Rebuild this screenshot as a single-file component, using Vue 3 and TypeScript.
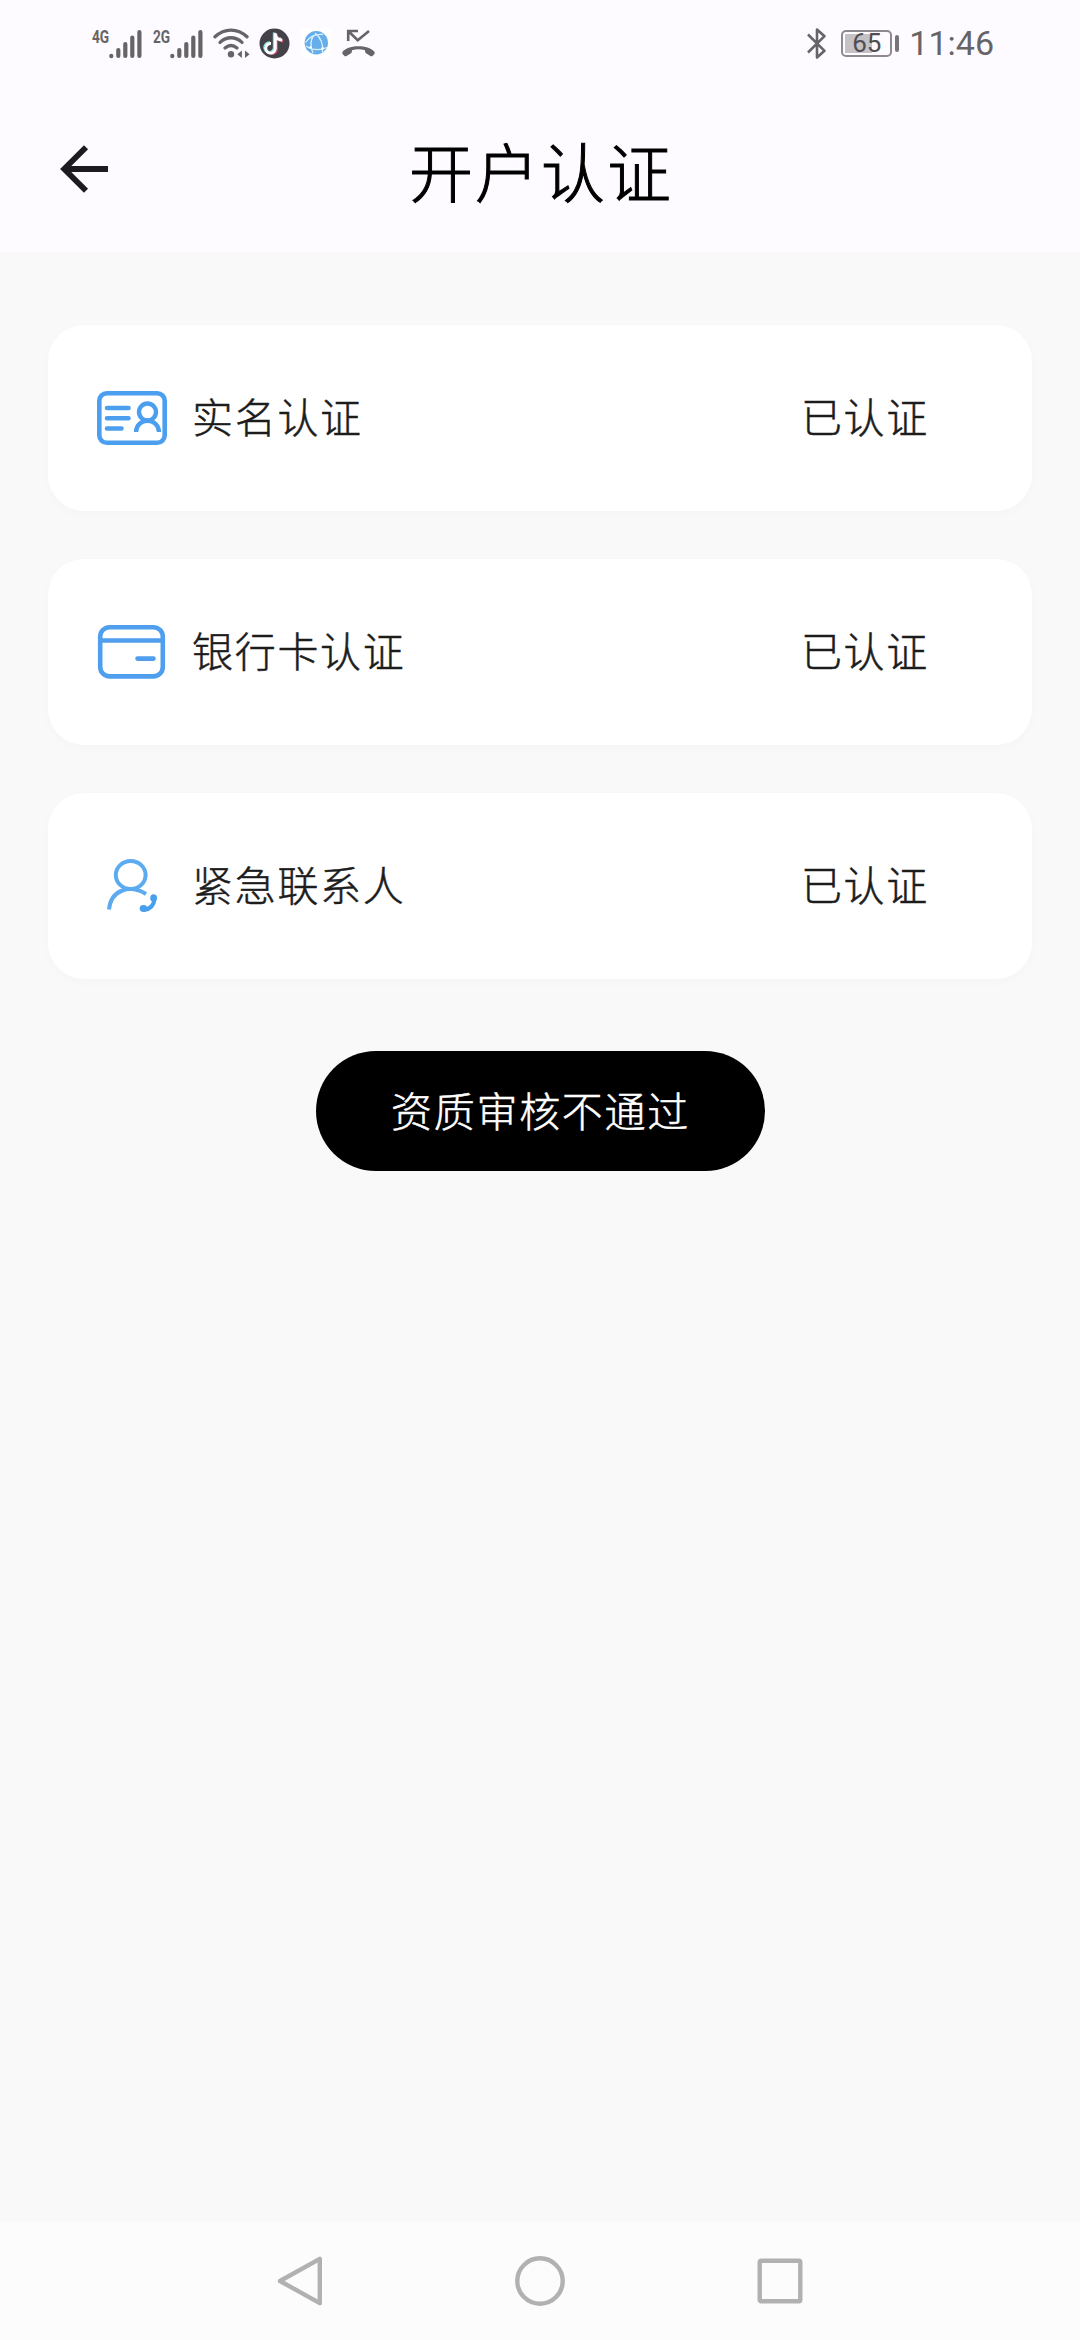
<script setup lang="ts">
interface AuthItem {
  icon: 'identity' | 'card' | 'contact'
  label: string
  status: string
}

const items: AuthItem[] = [
  { icon: 'identity', label: '实名认证', status: '已认证' },
  { icon: 'card', label: '银行卡认证', status: '已认证' },
  { icon: 'contact', label: '紧急联系人', status: '已认证' },
]

const networks: string[] = ['4G', '2G']
</script>

<template>
  <div class="screen">
    <header class="top">
      <div class="status-bar">
        <div class="status-left">
          <div v-for="net in networks" :key="net" class="signal">
            <span class="net">{{ net }}</span>
            <svg class="bars" width="33" height="32" viewBox="0 0 33 32">
              <g stroke="#666467" stroke-width="4.2" stroke-linecap="round">
                <path d="M2.3 27.8v.4M9.3 22v6M16.3 16v12M23.3 9.5V28M30.4 4v24" />
              </g>
            </svg>
          </div>
          <svg class="wifi" width="38" height="32" viewBox="0 0 38 32">
            <g fill="none" stroke="#666467" stroke-width="3.3" stroke-linecap="round">
              <path d="M2 9.8C11.5.8 24.5.8 34 9.8" />
              <path d="M7 15.4c6.8-6.2 15.2-6.2 22 0" />
              <path d="M12 21c3.8-3.2 8.2-3.2 12 0" />
            </g>
            <circle cx="18" cy="27.3" r="3.2" fill="#666467" />
            <path d="M24.3 27.3l4.6-3.8v7.6zM32 23.5v7.6l4.6-3.8z" fill="#666467" />
          </svg>
          <svg class="tiktok" width="31" height="31" viewBox="0 0 31 31">
            <circle cx="15.5" cy="15.5" r="15" fill="#444148" />
            <g fill="none" stroke-width="2.8">
              <path d="M15.200 4.400v15.300a4.800 4.800 0 1 1-4.400-5M15.200 5.400c.6 3.600 3.200 5.400 6.800 5.600" stroke="#7fe3e0" />
              <path d="M17.600 6v15.300a4.800 4.800 0 0 1-8 3M17.600 7.600c.8 3.400 3.200 5.200 6.800 5.400" stroke="#c5496a" />
              <path d="M16.400 5.200v15.300a4.800 4.800 0 1 1-4.400-5M16.400 6.400c.6 3.600 3.200 5.400 6.800 5.600" stroke="#fff" />
            </g>
          </svg>
          <svg class="globe" width="32" height="32" viewBox="0 0 32 32">
            <rect x="1" y="1" width="30" height="30" rx="5" fill="#fff" />
            <circle cx="16.3" cy="15.8" r="11.7" fill="#65adeb" />
            <g fill="none" stroke="#d9f0fc" stroke-width="1.3">
              <path d="M5.5 15.500C10 9 17 7 23 7.500M15 6C20 10 23.500 17 22.500 25.500M6 19c6 4 14 4.500 21 1.500M14 8c-4 5-4 11-1 18" />
            </g>
            <circle cx="10.500" cy="20.500" r="1.300" fill="#fff" />
            <circle cx="22.500" cy="21.500" r="1.300" fill="#fff" />
          </svg>
          <svg class="missed" width="33" height="30" viewBox="0 0 33 30">
            <path d="M6.200 13V3H16M6.500 3.300l9.200 9L27 3" fill="none" stroke="#666467" stroke-width="2.600" />
            <path d="M.800 23.500C7 16.500 26 16.500 32.200 23.500c.8 1 .6 2-.2 2.900l-1.300 1.300c-.7.600-1.600.700-2.300.2l-4.400-2.700c-.6-.4-.9-1-.9-1.700v-1.200c-4.300-1.300-8.900-1.300-13.200 0v1.200c0 .7-.3 1.300-.9 1.700l-4.400 2.700c-.7.500-1.600.400-2.300-.2L1 26.400c-.8-.9-1-1.900-.2-2.900z" fill="#666467" />
          </svg>
        </div>
        <div class="status-right">
          <svg class="bt" width="22" height="33" viewBox="0 0 22 33">
            <path d="M2 7.500l16.500 16.300L11 30.500V2.500l7.500 6.700L2 25.500" fill="none" stroke="#666467" stroke-width="2.600" stroke-linejoin="round" />
          </svg>
          <div class="battery"><span class="level">65</span></div>
          <div class="battery-tip"></div>
          <span class="clock">11:46</span>
        </div>
      </div>
      <div class="app-bar">
        <svg class="back" width="48" height="48" viewBox="0 0 48 48">
          <path d="M48 24H5M26 2.200L4.200 24 26 45.800" fill="none" stroke="#1d1b20" stroke-width="5.800" />
        </svg>
        <h1 class="title">开户认证</h1>
      </div>
    </header>

    <main class="content">
      <section v-for="item in items" :key="item.label" class="card">
        <svg v-if="item.icon === 'identity'" class="icon" width="72" height="60" viewBox="0 0 72 60">
          <g fill="none" stroke="#4c9fee" stroke-linecap="round">
            <rect x="3.300" y="5.300" width="65.400" height="49.400" rx="7.500" stroke-width="4.600" />
            <path d="M11 20h21.500M11 30.200h21.500M11 40.500h14.500" stroke-width="4.600" />
            <circle cx="51.500" cy="24" r="8.500" stroke-width="4.400" />
            <path d="M40 44c.5-15 22.500-15 23 0" stroke-width="4.400" stroke-linecap="butt" />
          </g>
        </svg>
        <svg v-else-if="item.icon === 'card'" class="icon" width="72" height="60" viewBox="0 0 72 60">
          <g fill="none" stroke="#4f9fee" stroke-linecap="round">
            <rect x="4.200" y="5.200" width="62.600" height="49.200" rx="9.500" stroke-width="4.600" />
            <path d="M4.500 18.500h62M41.500 36.600h16" stroke-width="4.600" />
          </g>
        </svg>
        <svg v-else class="icon" width="72" height="60" viewBox="0 0 72 60">
          <g fill="none" stroke="#5cabf1">
            <ellipse cx="34.700" cy="19" rx="14.900" ry="14" stroke-width="4" />
            <path d="M13 53.500C15 33 34.500 28.500 50 38" stroke-width="4" />
            <path d="M58.500 43c-.5 6-4.500 10-10.500 11" stroke="#489fee" stroke-width="4" />
          </g>
          <ellipse cx="57.600" cy="42" rx="3.400" ry="3.800" fill="#489fee" />
          <ellipse cx="47.500" cy="52.500" rx="3.800" ry="3.400" fill="#489fee" />
        </svg>
        <span class="label">{{ item.label }}</span>
        <span class="state">{{ item.status }}</span>
      </section>
      <button class="result" type="button">资质审核不通过</button>
    </main>

    <nav class="nav-bar">
      <svg width="50" height="50" viewBox="0 0 50 50">
        <path d="M44.800 2.800v44.400L5 25z" class="nav-shape" />
      </svg>
      <svg width="50" height="50" viewBox="0 0 50 50">
        <circle cx="25" cy="25" r="22.700" class="nav-shape" />
      </svg>
      <svg width="50" height="50" viewBox="0 0 50 50">
        <rect x="4.700" y="4.700" width="40.600" height="40.600" rx="1.500" class="nav-shape" />
      </svg>
    </nav>
  </div>
</template>

<style>
body {
  margin: 0;
}
</style>

<style scoped>
.screen {
  display: flex;
  flex-direction: column;
  width: 1080px;
  height: 2340px;
  overflow: hidden;
  background: #f9f9f9;
  color: #1c1c1c;
  font-family: Roboto, "Noto Sans CJK SC", sans-serif;
}
.top {
  height: 252px;
  background: #fdfbff;
}
.status-bar {
  display: flex;
  justify-content: space-between;
  height: 86px;
  padding: 0 86px 0 92px;
  box-sizing: border-box;
  color: #666467;
}
.status-left,
.status-right {
  display: flex;
  align-items: center;
  height: 86px;
}
.signal {
  display: flex;
  align-items: flex-start;
  width: 61px;
  height: 34px;
  padding-top: 2px;
  box-sizing: border-box;
}
.net {
  width: 17px;
  font-size: 19px;
  line-height: 18px;
  font-weight: 700;
  transform: scaleX(0.72);
  transform-origin: left;
}
.wifi {
  margin-left: -1px;
}
.tiktok {
  margin-left: 8px;
}
.globe {
  margin-left: 10px;
}
.missed {
  margin-left: 10px;
}
.battery {
  display: flex;
  align-items: center;
  justify-content: center;
  width: 51px;
  height: 27px;
  margin-left: 13px;
  border: 2px solid #8c8a8d;
  border-radius: 5px;
  box-sizing: border-box;
  background: linear-gradient(90deg, #c4c2c5 62%, transparent 62%) 2px 2px / 43px 19px no-repeat;
}
.level {
  font-size: 26px;
  line-height: 26px;
  color: #504e51;
}
.battery-tip {
  width: 4px;
  height: 17px;
  margin-left: 3px;
  border-radius: 2px;
  background: #777578;
}
.clock {
  margin-left: 10px;
  font-size: 34px;
}
.app-bar {
  display: grid;
  grid-template-columns: 1fr auto 1fr;
  align-items: center;
  height: 166px;
  padding: 0 60px;
}
.back {
  margin-bottom: 1px;
}
.title {
  margin: 13px 0 0 2px;
  font-size: 64px;
  line-height: 80px;
  font-weight: 300;
  letter-spacing: 2px;
  color: #000;
  -webkit-text-stroke: 1px currentColor;
}
.content {
  display: flex;
  flex: 1;
  flex-direction: column;
  align-items: center;
  gap: 48px;
  padding: 73px 48px 0;
}
.card {
  display: flex;
  align-items: center;
  width: 984px;
  height: 186px;
  padding: 0 103px 0 48px;
  box-sizing: border-box;
  border-radius: 36px;
  background: #fff;
  box-shadow: 0 3px 12px rgba(0, 0, 0, 0.018);
}
.label,
.state {
  padding-top: 2px;
  font-size: 41px;
  line-height: 60px;
  font-weight: 300;
  letter-spacing: 1.700px;
  -webkit-text-stroke: 0.500px currentColor;
}
.label {
  margin-left: 24px;
}
.state {
  margin-left: auto;
}
.result {
  width: 449px;
  height: 120px;
  margin-top: 24px;
  padding: 0 0 4px 1px;
  border: 0;
  border-radius: 60px;
  background: #000;
  color: #fff;
  font-family: inherit;
  font-size: 41px;
  font-weight: 300;
  letter-spacing: 1.700px;
  -webkit-text-stroke: 0.500px currentColor;
}
.nav-bar {
  display: flex;
  align-items: center;
  justify-content: center;
  gap: 190px;
  height: 118px;
  background: #fcfcfc;
}
.nav-shape {
  fill: none;
  stroke: #b1b1b1;
  stroke-width: 4.400;
  stroke-linejoin: round;
}
</style>
